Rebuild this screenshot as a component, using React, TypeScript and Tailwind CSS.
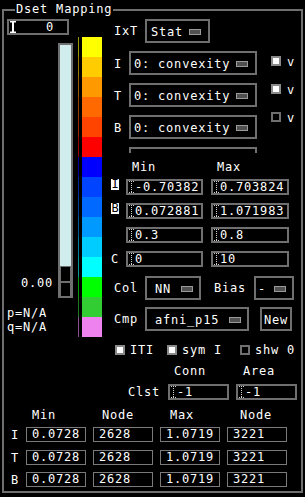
import React from "react";

const PANES = [
  "#ffff00", "#ffcc00", "#ff9900", "#ff6900", "#ff4400", "#ff0000",
  "#0000ff", "#0044ff", "#0069ff", "#0099ff", "#00ccff", "#00ffff",
  "#00ff00", "#32cd32", "#ee82ee",
];

function ICursor() {
  return (
    <svg width="6" height="12" className="shrink-0 ml-[1px]">
      <rect x="0" y="0" width="6" height="1.5" fill="#fff" />
      <rect x="2" y="0" width="2" height="12" fill="#fff" />
      <rect x="0" y="10.5" width="6" height="1.5" fill="#fff" />
    </svg>
  );
}

function DotCursor() {
  return (
    <svg width="5" height="12" className="shrink-0">
      <line x1="0" y1="0.5" x2="5" y2="0.5" stroke="#cfcfcf" strokeWidth="1" strokeDasharray="1 1" />
      <line x1="2.5" y1="0" x2="2.5" y2="12" stroke="#cfcfcf" strokeWidth="1" strokeDasharray="1 1" />
      <line x1="0" y1="11.5" x2="5" y2="11.5" stroke="#cfcfcf" strokeWidth="1" strokeDasharray="1 1" />
    </svg>
  );
}

function Ind() {
  return <div className="w-[12px] h-[6px] border border-[#9a9a9a] bg-[#505050] shrink-0" />;
}

function Check({ on }: { on: boolean }) {
  return (
    <div
      className={
        on
          ? "w-[10px] h-[10px] border-2 border-[#8a8a8a] bg-white shrink-0"
          : "w-[10px] h-[10px] border-2 border-[#6f6f6f] bg-black shrink-0"
      }
    />
  );
}

function Field({ cls, value }: { cls: string; value: string }) {
  return (
    <div className={"h-[16px] border-2 border-[#6f6f6f] flex items-center pl-[1px] " + cls}>
      <DotCursor />
      <span className="leading-[12px] ml-[1px] whitespace-pre">{value}</span>
    </div>
  );
}

function HiLabel({ t }: { t: string }) {
  return (
    <div className="w-[8px] h-[11px] bg-white text-black leading-[11px] tracking-[0px] self-start flex justify-center">
      {t}
    </div>
  );
}

function TCell({ v }: { v: string }) {
  return (
    <div className="w-[60px] h-[15px] border border-[#7a7a7a] pl-[5px] leading-[13px] whitespace-pre">
      {v}
    </div>
  );
}

function TableRow({ l, cls }: { l: string; cls: string }) {
  return (
    <div className={"flex h-[15px] items-center pl-[7px] " + cls}>
      <span className="w-[15px]">{l}</span>
      <TCell v="0.0728" />
      <div className="ml-[7px]">
        <TCell v="2628" />
      </div>
      <div className="ml-[7px]">
        <TCell v="1.0719" />
      </div>
      <div className="ml-[7px]">
        <TCell v="3221" />
      </div>
    </div>
  );
}

export default function App() {
  return (
    <div className="w-[305px] h-[497px] bg-black text-white overflow-hidden pt-[9px] pl-[2px] font-['DejaVu_Sans_Mono',monospace] text-[12px] leading-[14px] tracking-[0.8px]">
      <div className="relative w-[301px] h-[484px] border-2 border-[#6f6f6f]">
        <div className="absolute left-[11px] top-[-9px] bg-black px-[1px]">Dset Mapping</div>

        {/* top area */}
        <div className="flex">
          {/* left column */}
          <div className="w-[101px] flex flex-col pl-[3px]">
            <div className="mt-[8px] w-[62px] h-[16px] border-2 border-[#6f6f6f] flex items-center">
              <ICursor />
              <span className="ml-[30px] leading-[12px]">0</span>
            </div>
            <div className="flex mt-[2px]">
              <div className="w-[51px] flex flex-col">
                <div className="h-[239px]" />
                <div className="pl-[14px]">0.00</div>
                <div className="mt-[16px]">p=N/A</div>
                <div>q=N/A</div>
              </div>
              <div className="mt-[6px] w-[15px] h-[255px] border-2 border-[#6f6f6f] bg-[#d1ecec] flex flex-col justify-end">
                <div className="h-[30px] bg-[#6f6f6f] flex flex-col gap-[2px] px-[1px] pt-[1px]">
                  <div className="flex-1 bg-black" />
                  <div className="flex-1 bg-black" />
                </div>
              </div>
              <div className="ml-[5px] w-[1px] flex flex-col opacity-60">
                {PANES.map((c) => (
                  <div key={"t" + c} className="h-[20px]" style={{ backgroundColor: c }} />
                ))}
              </div>
              <div className="ml-[3px] w-[20px] flex flex-col">
                {PANES.map((c) => (
                  <div key={c} className="h-[20px]" style={{ backgroundColor: c }} />
                ))}
              </div>
            </div>
          </div>

          {/* right column */}
          <div className="w-[195px] flex flex-col">
            <div className="mt-[8px] flex items-center h-[24px] pl-[9px]">
              <span className="w-[31px]">IxT</span>
              <div className="w-[65px] h-[24px] border-2 border-[#6f6f6f] flex items-center justify-between pl-[4px] pr-[7px] pt-[1px]">
                <span>Stat</span>
                <Ind />
              </div>
            </div>

            <div className="flex mt-[8px]">
              <div className="w-[152px] flex flex-col pl-[9px]">
                {["I", "T", "B"].map((l, i) => (
                  <div key={l} className={i === 0 ? "flex items-center h-[24px]" : "flex items-center h-[24px] mt-[8px]"}>
                    <span className="w-[15px] pt-[1px]">{l}</span>
                    <div className="w-[128px] h-[24px] border-2 border-[#6f6f6f] flex items-center justify-between pl-[3px] pr-[7px] pt-[1px]">
                      <span>0: convexity</span>
                      <Ind />
                    </div>
                  </div>
                ))}
                <div className="mt-[8px] ml-[15px] w-[128px] h-[6px] border-2 border-b-0 border-[#6f6f6f]" />
              </div>
              <div className="ml-[14px] flex flex-col pt-[3px]">
                {[true, true, false].map((on, i) => (
                  <div key={i} className={i === 0 ? "flex items-center h-[14px]" : "flex items-center h-[14px] mt-[14px]"}>
                    <Check on={on} />
                    <span className="ml-[6px] pt-[1px]">v</span>
                  </div>
                ))}
              </div>
            </div>

            <div className="mt-[7px] flex pl-[27px]">
              <span className="w-[85px]">Min</span>
              <span>Max</span>
            </div>

            {[
              { l: "I", hi: true, a: "-0.70382", b: "0.703824" },
              { l: "B", hi: true, a: "0.072881", b: "1.071983" },
              { l: "", hi: false, a: "0.3", b: "0.8" },
              { l: "C", hi: false, a: "0", b: "10" },
            ].map((r, i) => (
              <div key={i} className={i === 0 ? "flex h-[16px] items-center pl-[6px] mt-[5px]" : "flex h-[16px] items-center pl-[6px] mt-[8px]"}>
                <div className="w-[8px] h-[16px] flex items-center">
                  {r.hi ? <HiLabel t={r.l} /> : <span className="tracking-[0px]">{r.l}</span>}
                </div>
                <Field cls="ml-[7px] w-[77px]" value={r.a} />
                <Field cls="ml-[8px] w-[78px]" value={r.b} />
              </div>
            ))}

            <div className="mt-[9px] flex items-center h-[24px] pl-[9px]">
              <span className="w-[31px]">Col</span>
              <div className="w-[56px] h-[24px] border-2 border-[#6f6f6f] flex items-center justify-between pl-[8px] pr-[6px] pt-[1px]">
                <span>NN</span>
                <Ind />
              </div>
              <span className="ml-[13px] w-[40px]">Bias</span>
              <div className="w-[40px] h-[24px] border-2 border-[#6f6f6f] flex items-center justify-between pl-[2px] pr-[6px] pt-[1px]">
                <span>-</span>
                <Ind />
              </div>
            </div>

            <div className="mt-[7px] flex items-center h-[24px] pl-[9px]">
              <span className="w-[31px]">Cmp</span>
              <div className="w-[104px] h-[24px] border-2 border-[#6f6f6f] flex items-center justify-between pl-[8px] pr-[6px] pt-[1px]">
                <span>afni_p15</span>
                <Ind />
              </div>
              <div className="ml-[11px] w-[32px] h-[24px] border-2 border-[#6f6f6f] flex items-center justify-center pt-[1px]">
                <span>New</span>
              </div>
            </div>
          </div>
        </div>

        {/* checkbox row */}
        <div className="mt-[6px] flex items-center h-[14px] pl-[111px]">
          <Check on={true} />
          <span className="ml-[5px] w-[37px]">ITI</span>
          <Check on={true} />
          <span className="ml-[5px] w-[58px]">sym I</span>
          <Check on={false} />
          <span className="ml-[5px]">shw 0</span>
        </div>

        <div className="mt-[7px] flex pl-[170px]">
          <span className="w-[69px]">Conn</span>
          <span>Area</span>
        </div>

        <div className="mt-[6px] flex h-[16px] items-center pl-[124px]">
          <span className="w-[40px]">Clst</span>
          <Field cls="w-[61px]" value="-1" />
          <Field cls="ml-[7px] w-[61px]" value="-1" />
        </div>

        <div className="mt-[8px] flex pl-[28px]">
          <span className="w-[70px]">Min</span>
          <span className="w-[68px]">Node</span>
          <span className="w-[70px]">Max</span>
          <span>Node</span>
        </div>

        <TableRow l="I" cls="mt-[5px]" />
        <TableRow l="T" cls="mt-[8px]" />
        <TableRow l="B" cls="mt-[7px]" />
      </div>
    </div>
  );
}
